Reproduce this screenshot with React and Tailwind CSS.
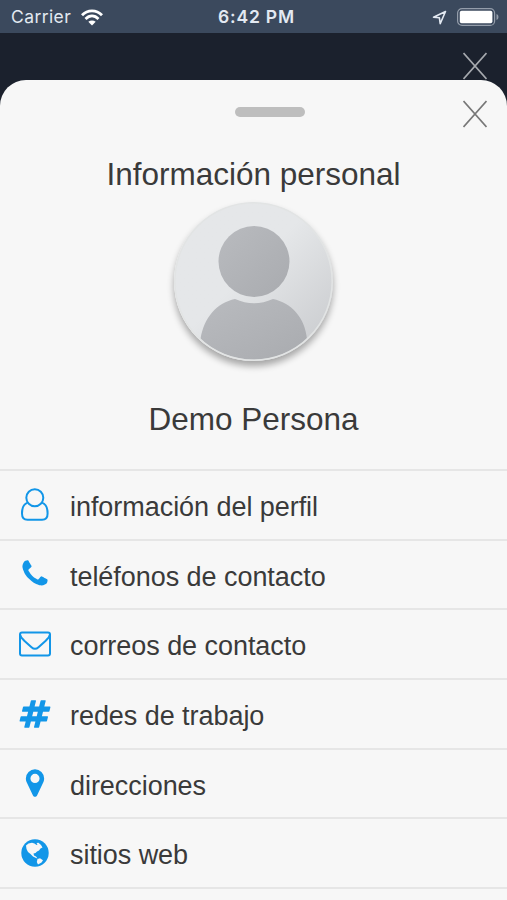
import { clsx } from "clsx";

// icon shapes on a 1792 grid
const PHONE =
  "M1600 1240q0 27-10 70.5t-21 68.5q-21 50-122 106-94 51-186 51-27 0-53-3.5t-57.5-12.5-47-14.5-55.5-20.5-49-18q-98-35-175-83-127-79-264-216t-216-264q-48-77-83-175-3-9-18-49t-20.5-55.5-14.5-47-12.5-57.5-3.5-53q0-92 51-186 56-101 106-122 25-11 68.5-21t70.5-10q14 0 21 3 18 6 53 76 11 19 30 54t35 63.5 31 53.5q3 4 17.5 25t21.5 35.5 7 28.5q0 20-28.5 50t-62 55-62 53-28.5 46q0 9 5 22.5t8.5 20.5 14 24 11.5 19q76 137 174 235t235 174q2 1 19 11.5t24 14 20.5 8.5 22.5 5q18 0 46-28.5t53-62 55-62 50-28.5q14 0 28.5 7t35.5 21.5 25 17.5q25 15 53.5 31t63.5 35 54 30q70 35 76 53 3 7 3 21z";
const HASHTAG =
  "M991 1024l64-256h-254l-64 256h254zm768-504l-56 224q-7 24-31 24h-327l-64 256h311q15 0 25 12 10 14 6 28l-56 224q-5 24-31 24h-327l-81 328q-7 24-31 24h-224q-16 0-26-12-9-12-6-28l78-312h-254l-81 328q-7 24-31 24h-225q-15 0-25-12-9-12-6-28l78-312h-311q-15 0-25-12-9-12-6-28l56-224q7-24 31-24h327l64-256h-311q-15 0-25-12-10-14-6-28l56-224q5-24 31-24h327l81-328q7-24 32-24h224q15 0 25 12 9 12 6 28l-78 312h254l81-328q7-24 32-24h224q15 0 25 12 9 12 6 28l-78 312h311q15 0 25 12 9 12 6 28z";
const MARKER =
  "M1152 640q0-106-75-181t-181-75-181 75-75 181 75 181 181 75 181-75 75-181zm256 0q0 109-33 179l-364 774q-16 33-47.5 52t-67.5 19-67.5-19-46.5-52l-365-774q-33-70-33-179 0-212 150-362t362-150 362 150 150 362z";

function SolidIcon({ d }) {
  return (
    <svg viewBox="0 0 1792 1792" className="size-8" fill="currentColor">
      <path d={d} />
    </svg>
  );
}

function UserIcon() {
  return (
    <svg viewBox="0 0 32 34" className="h-[34px] w-8" fill="none" stroke="currentColor" strokeWidth="2">
      <circle cx="15.8" cy="9.7" r="8.5" />
      <path d="M8.6 14.6C5 15.8 3 19.8 3 25.5C3 29.5 5 31.8 8.5 31.8H23.1C26.6 31.8 28.6 29.5 28.6 25.5C28.6 19.8 26.6 15.8 23 14.6" />
    </svg>
  );
}

function MailIcon() {
  return (
    <svg viewBox="0 0 32 26" className="h-[26px] w-8" fill="none" stroke="currentColor" strokeWidth="2">
      <rect x="1" y="1.5" width="30" height="23" rx="2" />
      <path d="M1 3.5C1.5 6 3 7.8 5 9.4L12.5 16.2C15 18.5 17 18.5 19.5 16.2L27 9.4C29 7.8 30.5 6 31 3.5" />
    </svg>
  );
}

function GlobeIcon() {
  return (
    <svg viewBox="0 0 28 28" className="size-7">
      <circle cx="14" cy="14" r="13.7" fill="currentColor" />
      <path
        fill="#f7f7f7"
        d="M5 6.5L7.5 4.5L11 3.8L13.5 4.6L15.5 6L16.5 5.4L15.5 4L17.5 3.8L20 6L21.5 8.500L19.500 9.500L18 11.500L16 12.500L14.500 14L12.500 14.500L13 16.500L15 17.500L16.500 19.500L15 19L12 17.500L9.500 15L7 13L5.500 10Z"
      />
      <path fill="#f7f7f7" d="M16.5 20L19 19.3L22 21.3L20.5 23.5L17 25.5L15.8 23Z" />
    </svg>
  );
}

const items = [
  { label: "información del perfil", icon: <UserIcon /> },
  { label: "teléfonos de contacto", icon: <SolidIcon d={PHONE} /> },
  { label: "correos de contacto", icon: <MailIcon /> },
  { label: "redes de trabajo", icon: <SolidIcon d={HASHTAG} /> },
  { label: "direcciones", icon: <SolidIcon d={MARKER} /> },
  { label: "sitios web", icon: <GlobeIcon /> },
];

function CloseIcon({ className }) {
  return (
    <svg viewBox="0 0 24 28" className={clsx("h-7 w-6", className)} stroke="currentColor" strokeWidth="1.7">
      <path d="M0.5 1L23.5 27M23.5 1L0.5 27" />
    </svg>
  );
}

function StatusBar() {
  return (
    <header className="grid h-[33px] shrink-0 grid-cols-[1fr_auto_1fr] items-center bg-[#3b495d] pt-px pr-2 pl-[11px] text-[17.5px] text-[#e3e9f2]">
      <div className="flex items-center gap-2.5">
        <span className="tracking-[0.4px]">Carrier</span>
        <svg viewBox="0 0 22 17" className="h-[17px] w-[22px]" fill="none" stroke="#fff" strokeWidth="2.8">
          <path d="M1 6.3C6.5 0.5 15.5 0.5 21 6.3M4.5 10C8.5 6 13.5 6 17.5 10" />
          <path d="M11 16.5L7.3 12.8C9.5 11 12.5 11 14.7 12.8Z" fill="#fff" stroke="none" />
        </svg>
      </div>
      <span className="pt-px pl-[3px] text-center font-semibold tracking-[0.8px]">6:42 PM</span>
      <div className="flex items-center justify-end gap-2.5">
        <svg viewBox="0 0 15 15" className="size-[15px]" fill="none" stroke="currentColor" strokeWidth="1.6" strokeLinejoin="round">
          <path d="M13.5 1.5L1.5 7.2L7.4 7.8L8.2 13.7Z" />
        </svg>
        <svg viewBox="0 0 42 18" className="h-[18px] w-[42px]">
          <rect x="0.6" y="0.6" width="37" height="16.8" rx="4.5" fill="none" stroke="#949daa" strokeWidth="1.2" />
          <rect x="2.8" y="2.8" width="32.6" height="12.4" rx="1.8" fill="#fff" />
          <path d="M39.5 6Q41.5 6.5 41.5 9T39.5 12Z" fill="#949daa" />
        </svg>
      </div>
    </header>
  );
}

export default function App() {
  return (
    <div className="flex h-[900px] w-[507px] flex-col overflow-hidden bg-[#1b212d] font-[Inter,sans-serif]">
      <StatusBar />
      <div className="flex h-[47px] shrink-0 justify-end pt-[19px] pr-5">
        <CloseIcon className="text-[#a6a9ae]" />
      </div>

      <main className="relative flex flex-1 flex-col rounded-t-[26px] bg-[#f7f7f7] font-['Liberation_Sans',sans-serif] text-[#3a3a3a]">
        <CloseIcon className="absolute top-5 right-5 text-[#777]" />
        <div className="mt-[27px] ml-[235px] h-2.5 w-[70px] rounded-full bg-[#bebebe]" />

        <h1 className="mt-[35px] text-center text-[31.5px] leading-[44px]">Información personal</h1>

        <div className="mx-auto mt-1.5 size-[159px] shrink-0 overflow-hidden rounded-full bg-linear-to-br from-[#e5e7e9] from-45% to-[#c6c8cb] shadow-[0_5px_7px_#00000055]">
          <svg viewBox="0 0 159 159" className="size-full">
            <defs>
              <linearGradient id="body" x1="0" y1="0" x2="1" y2="1">
                <stop offset="0" stopColor="#b9bbbf" />
                <stop offset="1" stopColor="#a9abaf" />
              </linearGradient>
            </defs>
            <circle cx="80" cy="59.5" r="35.5" fill="url(#body)" />
            <path d="M61 97Q80 105.5 99 97C117 101 131 115 133 137Q110 157.5 79.5 157.5T26.5 137C30 115 43 101 61 97Z" fill="url(#body)" />
            <circle cx="79.5" cy="79.5" r="78.7" fill="none" stroke="#e2e4e4" strokeWidth="1.6" />
          </svg>
        </div>

        <h2 className="mt-9 text-center text-[31.5px] leading-[44px]">Demo Persona</h2>

        <ul className="mt-7 border-t-2 border-[#e6e6e6]">
          {items.map((item) => (
            <li key={item.label} className="flex h-[69.67px] items-center border-b-2 border-[#e6e6e6] pl-[19px] text-[27px] tracking-[-0.05px]">
              <span className="mr-[19px] flex w-8 justify-center text-[#1296e8]">{item.icon}</span>
              <span className="pt-[5px]">{item.label}</span>
            </li>
          ))}
        </ul>
      </main>
    </div>
  );
}
